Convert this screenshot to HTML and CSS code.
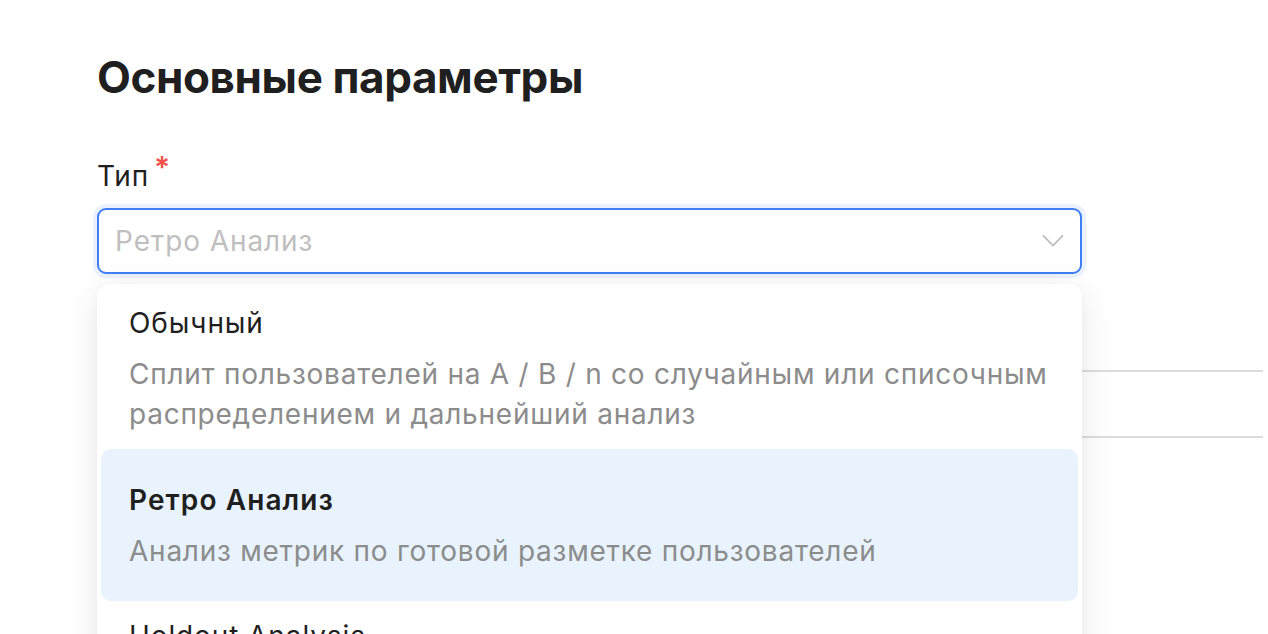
FILE: index.html
```html
<!DOCTYPE html>
<html lang="ru">
<head>
<meta charset="utf-8">
<title>Основные параметры</title>
<link rel="stylesheet" href="styles.css">
</head>
<body>
<main class="page">
  <h1 class="title">Основные параметры</h1>
  <div class="field">
    <div class="label">Тип<span class="req">*</span></div>
    <div class="select-wrap">
      <div class="select">
        <span class="placeholder">Ретро Анализ</span>
        <svg class="chevron" width="22" height="14" viewBox="0 0 22 14" aria-hidden="true">
          <path d="M1.5 1.8 L11 11.6 L20.5 1.8" fill="none" stroke="#bdbdbd" stroke-width="1.8" stroke-linecap="round" stroke-linejoin="round"/>
        </svg>
      </div>
      <div class="dropdown">
        <div class="option">
          <div class="opt-title">Обычный</div>
          <div class="opt-desc">Сплит пользователей на A / B / n со случайным или списочным распределением и дальнейший анализ</div>
        </div>
        <div class="option selected">
          <div class="opt-title">Ретро Анализ</div>
          <div class="opt-desc">Анализ метрик по готовой разметке пользователей</div>
        </div>
        <div class="option">
          <div class="opt-title">Holdout Analysis</div>
          <div class="opt-desc">Анализ долгосрочного эффекта на группе пользователей, исключённых из экспериментов</div>
        </div>
      </div>
    </div>
  </div>
  <div class="rows">
    <div class="row"></div>
    <div class="row"></div>
  </div>
</main>
</body>
</html>
```
FILE: styles.css
```css
* { box-sizing: border-box; }
html, body { margin: 0; padding: 0; background: #ffffff; }
body {
  font-family: Inter, "Noto Sans", "Liberation Sans", sans-serif;
  color: #1f1f1f;
  overflow: hidden;
  height: 634px;
}
.page {
  padding: 51px 0 0 97px;
}
.title {
  margin: 0;
  font-size: 44px;
  line-height: 52px;
  font-weight: 700;
  color: #1f1f1f;
  letter-spacing: -0.4px;
}
.field {
  margin-top: 54px;
  width: 985px;
}
.label {
  font-size: 28px;
  line-height: 36px;
  font-weight: 400;
  color: #1f1f1f;
  letter-spacing: 0.8px;
}
.req {
  color: #f0524a;
  font-size: 30px;
  font-weight: 600;
  margin-left: 5px;
  position: relative;
  top: -8px;
}
.select-wrap {
  position: relative;
  margin-top: 14px;
}
.select {
  width: 985px;
  height: 66px;
  border: 2px solid #3f7ef6;
  border-radius: 9px;
  box-shadow: 0 0 0 4px rgba(63, 126, 246, 0.10);
  display: flex;
  align-items: center;
  justify-content: space-between;
  padding: 0 16px 0 16px;
  background: #fff;
}
.placeholder {
  font-size: 28px;
  line-height: 40px;
  color: #bfbfbf;
  letter-spacing: 0.9px;
}
.chevron { display: block; }
.dropdown {
  position: absolute;
  top: 76px;
  left: 0;
  width: 985px;
  height: 420px;
  background: #fff;
  border-radius: 12px;
  box-shadow: 0 8px 36px rgba(0, 0, 0, 0.09), 0 2px 8px rgba(0, 0, 0, 0.04);
  padding: 4px;
  overflow: hidden;
  z-index: 2;
}
.option {
  min-height: 152px;
  padding: 15px 28px;
  border-radius: 10px;
  display: flex;
  flex-direction: column;
  justify-content: center;
}
.option.selected {
  background: #e8f3fe;
}
.opt-title {
  font-size: 28px;
  line-height: 40px;
  color: #1f1f1f;
  letter-spacing: 0.9px;
}
.selected .opt-title { font-weight: 600; letter-spacing: 1.1px; }
.opt-desc {
  margin-top: 11px;
  font-size: 28px;
  line-height: 40px;
  color: #8c8c8c;
  letter-spacing: 0.75px;
}
.rows {
  margin-top: 96px;
  width: 1166px;
}
.row {
  height: 66px;
  border-bottom: 2px solid #dcdcdc;
}
.row:first-child { height: 2px; }
```
